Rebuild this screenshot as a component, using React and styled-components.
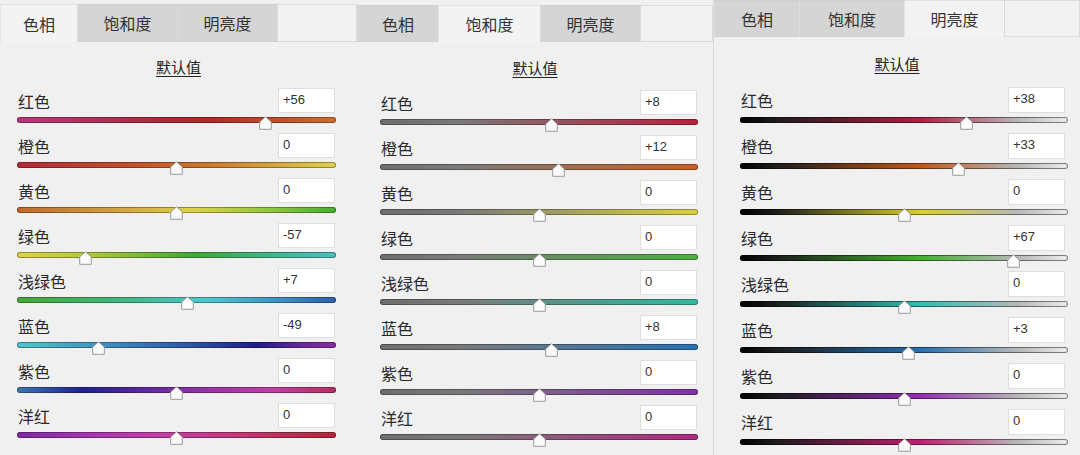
import React from 'react';
import styled, { createGlobalStyle } from 'styled-components';

const GlobalStyle = createGlobalStyle`
  html, body {
    margin: 0;
    padding: 0;
    background: #f0f0f0;
  }
  body {
    font-family: "Noto Sans CJK SC", "Noto Sans", sans-serif;
    color: #2a2a2a;
  }
`;

const Board = styled.div`
  display: grid;
  grid-template-columns: 357px 357px 366px;
  width: 1080px;
  height: 455px;
  overflow: hidden;
  background: #f0f0f0;
`;

const Panel = styled.section`
  display: flex;
  flex-direction: column;
  box-sizing: border-box;
  padding-top: ${(p) => p.$top}px;
  border-right: ${(p) => (p.$divider ? '1px solid #d9d9d9' : 'none')};
`;

const TabBar = styled.div`
  display: flex;
  flex-shrink: 0;
  height: ${(p) => p.$height}px;
`;

const Tab = styled.div`
  display: flex;
  align-items: center;
  justify-content: center;
  box-sizing: border-box;
  width: ${(p) => p.$width}px;
  font-size: 16px;
  color: #333;
  background: ${(p) => (p.$active ? '#f3f3f3' : '#d5d5d5')};
  border-top: 1px solid ${(p) => (p.$active ? '#e2e2e2' : '#d0d0d0')};
  border-bottom: ${(p) => (p.$active ? 'none' : '1px solid #cfcfcf')};
  border-left: 1px solid ${(p) => (p.$active ? '#e4e4e4' : '#dcdcdc')};
`;

const TabFiller = styled.div`
  flex: 1;
  box-sizing: border-box;
  background: #f2f2f2;
  border: 1px solid #dadada;
`;

const Title = styled.div`
  display: flex;
  align-items: center;
  justify-content: center;
  flex-shrink: 0;
  height: ${(p) => p.$height}px;
  padding-top: 2px;
  box-sizing: border-box;
  font-size: 15px;
  text-decoration: underline;
  text-underline-offset: 3px;
  color: #222;
`;

const Rows = styled.div`
  display: flex;
  flex-direction: column;
  padding: 0 ${(p) => p.$right}px 0 ${(p) => p.$left}px;
`;

const Row = styled.div`
  display: flex;
  flex-direction: column;
  height: ${(p) => p.$pitch}px;
`;

const RowHead = styled.div`
  display: flex;
  align-items: center;
  justify-content: space-between;
  height: ${(p) => p.$height}px;
  padding-right: ${(p) => p.$inset}px;
`;

const Label = styled.span`
  font-size: 16px;
  padding-left: 1px;
  color: #2a2a2a;
`;

const ValueBox = styled.div`
  box-sizing: border-box;
  width: 57px;
  height: 100%;
  padding-left: 4px;
  background: #fff;
  border: 1px solid #dedede;
  font-family: "Liberation Sans", Arial, sans-serif;
  font-size: 13px;
  line-height: ${(p) => p.$height - 4}px;
  color: #333;
`;

const SliderWrap = styled.div`
  position: relative;
  height: 20px;
`;

const Track = styled.div`
  margin-top: 4px;
  height: 6px;
  border-radius: 3px;
  background: ${(p) => p.$gradient};
  box-shadow: inset 0 0 0 1px ${(p) => p.$edge};
`;

const Thumb = styled.svg`
  position: absolute;
  top: 3px;
  width: 13px;
  height: 14px;
  margin-left: -6.5px;
`;

const fmt = (v) => (v > 0 ? `+${v}` : `${v}`);

const hue = [
  ['红色', 56, 'linear-gradient(90deg,#b8387e 0%,#a82a3a 45%,#b02828 60%,#c8702e 100%)'],
  ['橙色', 0, 'linear-gradient(90deg,#b02a3c 0%,#c0502a 35%,#c8782e 60%,#dcd250 100%)'],
  ['黄色', 0, 'linear-gradient(90deg,#c0682c 0%,#d0a040 30%,#dcd24a 55%,#8cc83c 80%,#44b030 100%)'],
  ['绿色', -57, 'linear-gradient(90deg,#dcd44c 0%,#a8c83c 25%,#40a838 55%,#3cb890 80%,#48c0c0 100%)'],
  ['浅绿色', 7, 'linear-gradient(90deg,#44a838 0%,#3cb87a 30%,#4cc8d0 60%,#3a8cc0 85%,#2c60a8 100%)'],
  ['蓝色', -49, 'linear-gradient(90deg,#4cc8c8 0%,#3a8cc0 30%,#2a56a8 55%,#1a1c8c 75%,#6a2aa0 90%,#8c2ca0 100%)'],
  ['紫色', 0, 'linear-gradient(90deg,#3a78b4 0%,#1a2490 20%,#5a2aa0 40%,#8a32a8 55%,#c040a8 80%,#b03060 100%)'],
  ['洋红', 0, 'linear-gradient(90deg,#7a2ca8 0%,#a838b0 25%,#c040a8 45%,#c03878 70%,#b02838 100%)'],
];

const satColors = ['#b8203e', '#c86024', '#d8d040', '#4cb040', '#30b8a0', '#2a70b0', '#8030a8', '#b02880'];
const lumColors = ['#b02040', '#c05818', '#d8d030', '#44b030', '#30c0b0', '#2870b0', '#9030b0', '#c02070'];

const names = ['红色', '橙色', '黄色', '绿色', '浅绿色', '蓝色', '紫色', '洋红'];
const satValues = [8, 12, 0, 0, 0, 8, 0, 0];
const lumValues = [38, 33, 0, 67, 0, 3, 0, 0];

const panels = [
  {
    active: 0,
    top: 4,
    tabHeight: 38,
    tabs: [77, 100, 100],
    titleHeight: 46,
    pitch: 45,
    left: 17,
    right: 21,
    inset: 1,
    divider: false,
    edge: 'rgba(40,0,0,0.35)',
    rows: hue.map(([name, value, gradient]) => ({ name, value, gradient })),
  },
  {
    active: 1,
    top: 5,
    tabHeight: 37,
    tabs: [81, 102, 100],
    titleHeight: 48,
    pitch: 45,
    left: 23,
    right: 15,
    inset: 1,
    divider: true,
    edge: 'rgba(0,0,0,0.3)',
    rows: names.map((name, i) => ({
      name,
      value: satValues[i],
      gradient: `linear-gradient(90deg,#6e6e6e 0%,#7a7a7a 25%,${satColors[i]} 100%)`,
    })),
  },
  {
    active: 2,
    top: 0,
    tabHeight: 37,
    tabs: [85, 105, 100],
    titleHeight: 50,
    pitch: 46,
    left: 26,
    right: 12,
    inset: 3,
    divider: false,
    edge: 'rgba(0,0,0,0.45)',
    rows: names.map((name, i) => ({
      name,
      value: lumValues[i],
      gradient: `linear-gradient(90deg,#000 0%,#1a1a1a 10%,${lumColors[i]} 55%,#b8b8b8 85%,#ececec 100%)`,
    })),
  },
];

const tabNames = ['色相', '饱和度', '明亮度'];

const Slider = ({ value, gradient, edge }) => (
  <SliderWrap>
    <Track $gradient={gradient} $edge={edge} />
    <Thumb style={{ left: `${((value + 100) / 200) * 100}%` }} viewBox="0 0 13 14">
      <polygon points="6.5,0.8 12.3,6 12.3,13.3 0.7,13.3 0.7,6" fill="#fbfbfb" stroke="#9a9a9a" strokeWidth="1" />
    </Thumb>
  </SliderWrap>
);

const AdjustPanel = ({ cfg }) => (
  <Panel $top={cfg.top} $divider={cfg.divider}>
    <TabBar $height={cfg.tabHeight}>
      {tabNames.map((t, i) => (
        <Tab key={t} $width={cfg.tabs[i]} $active={i === cfg.active}>
          {t}
        </Tab>
      ))}
      <TabFiller />
    </TabBar>
    <Title $height={cfg.titleHeight}>默认值</Title>
    <Rows $left={cfg.left} $right={cfg.right}>
      {cfg.rows.map((r) => (
        <Row key={r.name} $pitch={cfg.pitch}>
          <RowHead $height={cfg.pitch - 20} $inset={cfg.inset}>
            <Label>{r.name}</Label>
            <ValueBox $height={cfg.pitch - 20}>{fmt(r.value)}</ValueBox>
          </RowHead>
          <Slider value={r.value} gradient={r.gradient} edge={cfg.edge} />
        </Row>
      ))}
    </Rows>
  </Panel>
);

const App = () => (
  <>
    <GlobalStyle />
    <Board>
      {panels.map((cfg, i) => (
        <AdjustPanel key={i} cfg={cfg} />
      ))}
    </Board>
  </>
);

export default App;
